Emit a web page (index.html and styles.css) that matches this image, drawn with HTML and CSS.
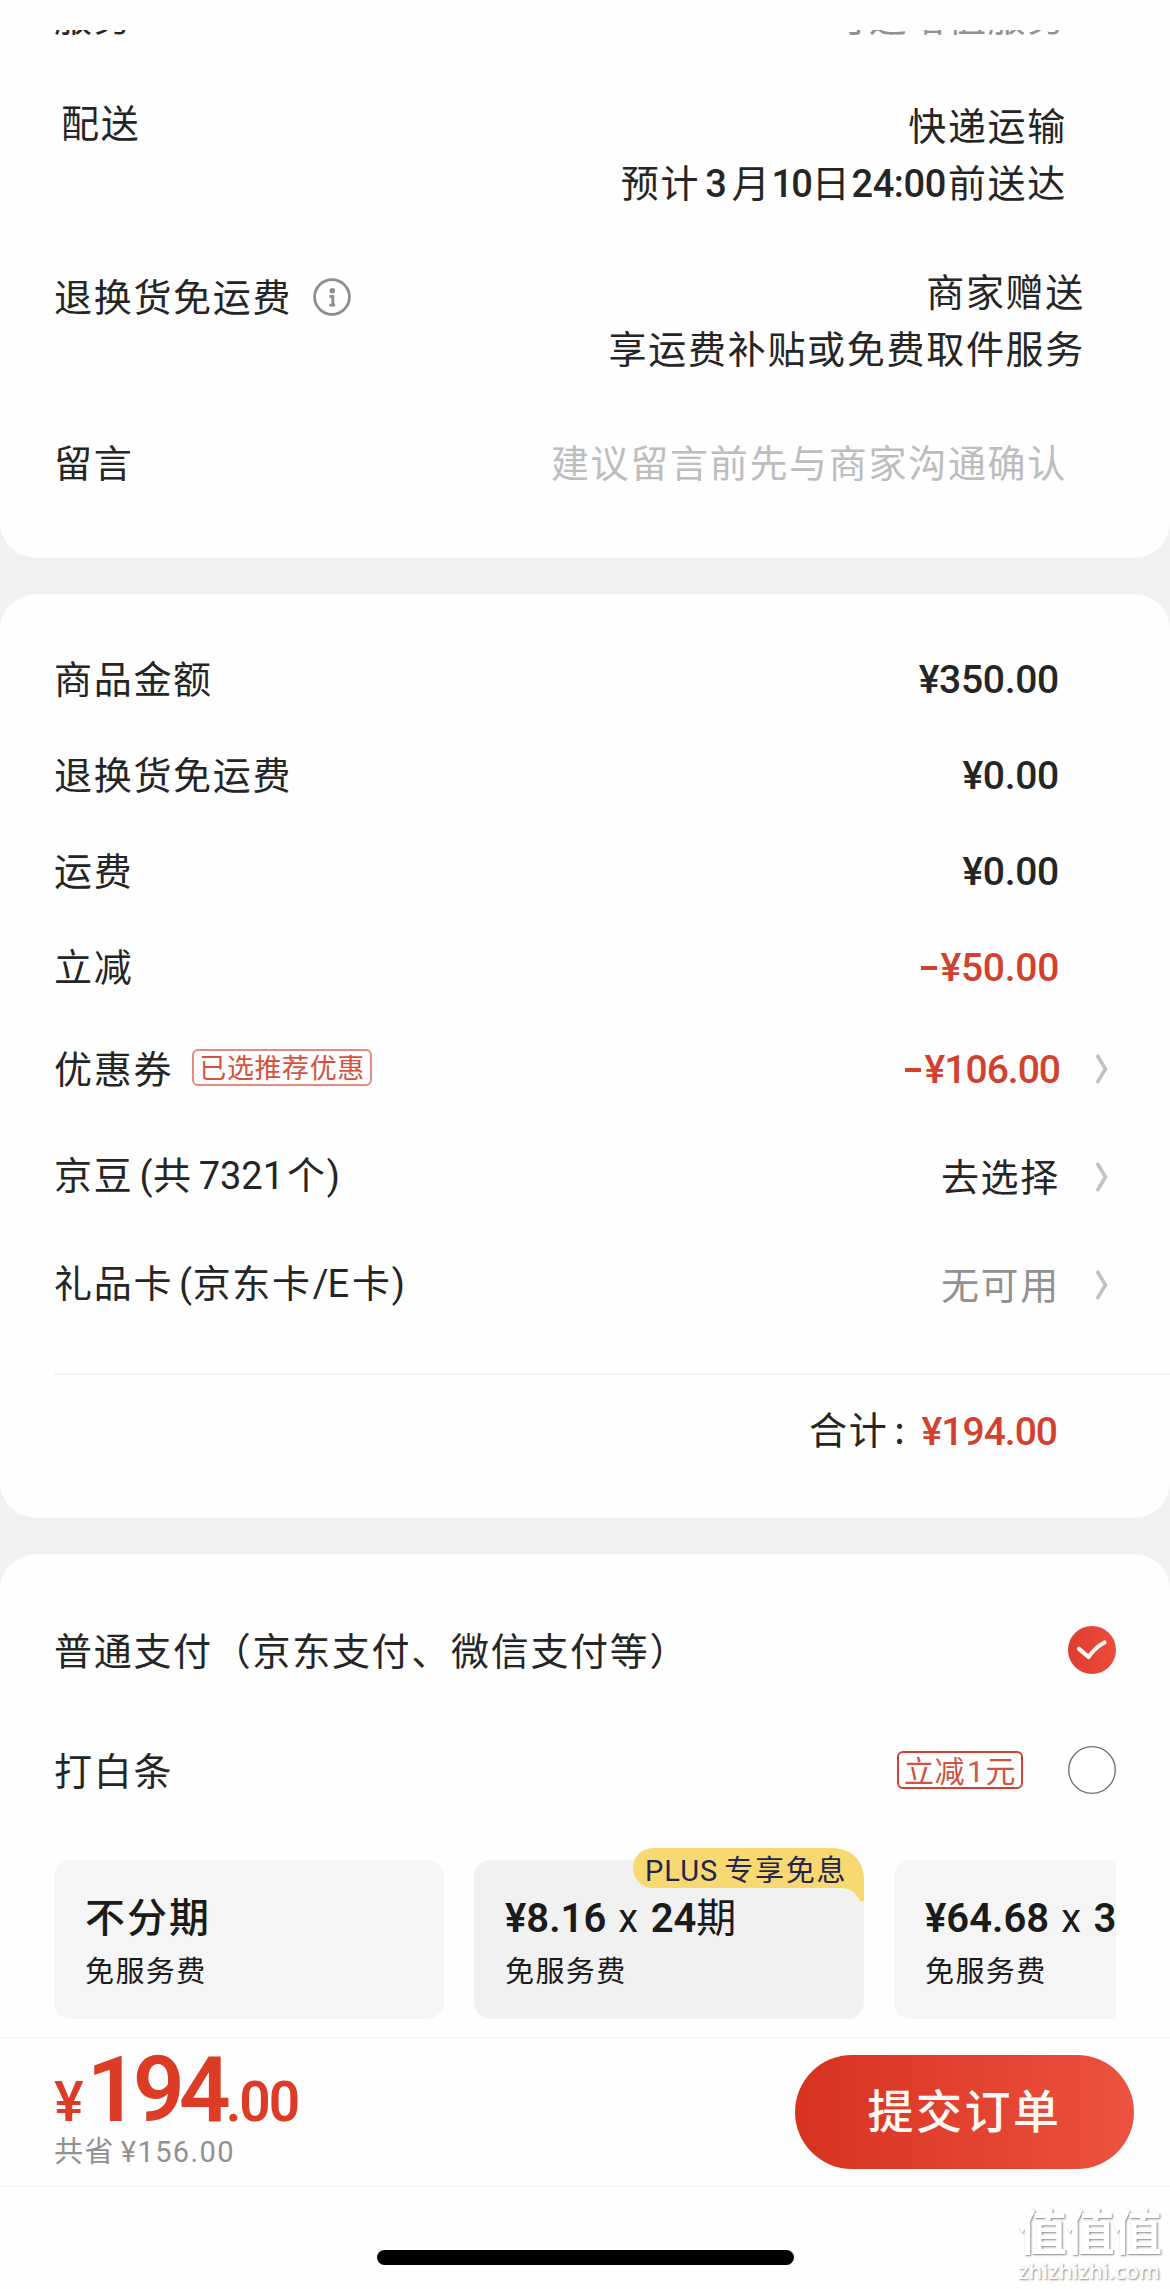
FILE: index.html
```html
<!DOCTYPE html>
<html lang="zh-CN">
<head>
<meta charset="utf-8">
<title>提交订单</title>
<link rel="stylesheet" href="styles.css">
</head>
<body>
<main class="page">
  <section class="card delivery">
    <div class="cut">
      <div class="cut-line"><span>服务</span><span class="muted cut-value">可选增值服务</span></div>
    </div>
    <div class="info shipping">
      <span class="label">配送</span>
      <div class="value">快递运输<br>预计<b class="num n3">3</b>月<b class="num n10">10</b>日<b class="num nt">24:00</b>前送达</div>
    </div>
    <div class="info returns">
      <span class="label">退换货免运费
        <svg class="info-icon" viewBox="0 0 38 38"><circle cx="19" cy="19" r="17.4" fill="none" stroke="#8e8e8e" stroke-width="2.8"/><circle cx="19.3" cy="12.8" r="2.8" fill="#8e8e8e"/><path d="M16.3 18.4h3.5v8.6M16.3 27.1h5.8" fill="none" stroke="#8e8e8e" stroke-width="2.8"/></svg>
      </span>
      <div class="value">商家赠送<br>享运费补贴或免费取件服务</div>
    </div>
    <div class="info message">
      <span class="label">留言</span>
      <div class="value placeholder">建议留言前先与商家沟通确认</div>
    </div>
  </section>

  <section class="card amounts">
    <div class="row r95"><span>商品金额</span><span class="num price">¥350.00</span></div>
    <div class="row r96"><span>退换货免运费</span><span class="num price">¥0.00</span></div>
    <div class="row r96"><span>运费</span><span class="num price">¥0.00</span></div>
    <div class="row r96"><span>立减</span><span class="num price red"><i class="minus"></i>¥50.00</span></div>
    <div class="row link coupon"><span class="label">优惠券<em class="tag">已选推荐优惠</em></span><span class="num price tight red"><i class="minus"></i>¥106.00</span>
      <svg class="chevron" viewBox="0 0 14 30"><path d="M2 1l8.5 14L2 29" fill="none" stroke="#c2c2c2" stroke-width="3.6"/></svg></div>
    <div class="row link"><span>京豆<span class="latin gap">(</span>共<span class="latin beans">7321</span>个<span class="latin">)</span></span><span>去选择</span>
      <svg class="chevron" viewBox="0 0 14 30"><path d="M2 1l8.5 14L2 29" fill="none" stroke="#c2c2c2" stroke-width="3.6"/></svg></div>
    <div class="row link"><span>礼品卡<span class="latin gap">(</span>京东卡<span class="latin ecard">/E</span>卡<span class="latin">)</span></span><span class="muted">无可用</span>
      <svg class="chevron" viewBox="0 0 14 30"><path d="M2 1l8.5 14L2 29" fill="none" stroke="#c2c2c2" stroke-width="3.6"/></svg></div>
    <div class="total"><span>合计<span class="colon">:</span></span><span class="num price tight red">¥194.00</span></div>
  </section>

  <section class="card payment">
    <div class="pay"><span>普通支付（京东支付、微信支付等）</span>
      <svg class="radio" viewBox="0 0 48 48"><defs><linearGradient id="rd" x1="0" x2="1" y2="0"><stop stop-color="#dd3c30"/><stop offset="1" stop-color="#ee4c3c"/></linearGradient></defs><circle cx="24" cy="24" r="24" fill="url(#rd)"/><path d="M11 22.8L20.500 31Q27 21.500 36.500 16.500" fill="none" stroke="#fff8f0" stroke-width="4.200" stroke-linecap="round" stroke-linejoin="round"/></svg>
    </div>
    <div class="pay"><span class="grow">打白条</span><em class="tag tag-off">立减<span class="latin one">1</span>元</em>
      <svg class="radio" viewBox="0 0 48 48"><circle cx="24" cy="24" r="23.300" fill="#fff" stroke="#707070" stroke-width="1.300"/></svg>
    </div>
    <div class="plans">
      <div class="plan"><div class="plan-title strong">不分期</div><div class="plan-sub">免服务费</div></div>
      <div class="plan active">
        <div class="badge">
          <svg class="badge-shape" viewBox="0 0 231 54"><path d="M20 0H198C220 0 231 14 231 32V53H227C223 44 218 40 206 40H20A20 20 0 0 1 20 0Z" fill="#f8d870"/></svg>
          <span class="badge-text"><span class="latin plus">PLUS</span>专享免息</span>
        </div>
        <div class="plan-title"><b class="num">¥8.16</b><span class="latin times">x</span><b class="num">24</b>期</div><div class="plan-sub">免服务费</div>
      </div>
      <div class="plan"><div class="plan-title"><b class="num">¥64.68</b><span class="latin times">x</span><b class="num">3</b>期</div><div class="plan-sub">免服务费</div></div>
    </div>
  </section>

  <footer class="bar">
    <div class="sum">
      <div class="sum-main"><span class="yen">¥</span><span class="big">194</span><span class="cents">.00</span></div>
      <div class="saved">共省<span class="latin saved-num">¥156.00</span></div>
    </div>
    <button class="submit">提交订单</button>
  </footer>
  <div class="bottom">
    <div class="home"></div>
    <div class="mark"><div class="mark-cn">值值值</div><div class="mark-en">zhizhizhi.com</div></div>
  </div>
</main>
</body>
</html>
```
FILE: styles.css
```css
* { box-sizing: border-box; }
body {
  margin: 0;
  background: #f1f1f1;
  color: #252525;
  font: 38px/57px "Noto Sans CJK SC", sans-serif;
  letter-spacing: 1.7px;
}
.page { width: 1170px; height: 2289px; overflow: hidden; display: flex; flex-direction: column; }
.card { background: #fefefe; flex: none; }
.num { font-family: Roboto, sans-serif; font-weight: 500; letter-spacing: 0; }
.latin { font-family: Roboto, sans-serif; letter-spacing: .5px; }
.muted { color: #919191; }
.red { color: #d2412e; }

.delivery { height: 558px; border-radius: 0 0 36px 36px; padding-top: 30px; }
.cut { height: 12px; overflow: hidden; padding: 0 103px 0 54px; display: flex; align-items: flex-end; }
.cut-line { flex: 1; display: flex; justify-content: space-between; margin-bottom: -1px; }
.info { display: flex; justify-content: space-between; align-items: center; }
.info .value { text-align: right; }
.info .label { display: flex; align-items: center; }
.shipping { margin-top: 53px; padding: 0 103px 0 61px; align-items: flex-start; }
.shipping .label { margin-top: -3px; }
.returns { margin-top: 48px; padding: 0 85px 0 54px; align-items: flex-start; }
.returns .label { margin-top: 5px; }
.message { margin-top: 57px; padding: 0 103px 0 54px; }
.placeholder { color: #bdbdbd; }
.info-icon { width: 38px; height: 38px; margin-left: 21px; margin-top: 4px; }
.n3 { margin: 0 5px; }
.n10 { margin: 0 1px 0 0; letter-spacing: -2px; }
.nt { margin: 0 2px 0 0; letter-spacing: -.4px; }

.amounts { margin-top: 36px; height: 924px; border-radius: 36px; padding-top: 35px; display: flex; flex-direction: column; }
.row { display: flex; justify-content: space-between; align-items: center; padding: 0 111px 0 54px; }
.r95 { height: 95px; }
.r96 { height: 96px; }
.price { display: flex; align-items: center; font-size: 39px; padding-top: 8px; letter-spacing: -.3px; }
.tight { letter-spacing: -1px; }
.minus { width: 16px; height: 4px; background: #d2412e; margin-right: 4px; }
.link { height: 108px; padding-right: 61px; }
.link > :first-child { flex: 1; }
.coupon .label { display: flex; align-items: center; }
.chevron { width: 14px; height: 30px; margin-left: 35px; margin-top: 6px; }
.tag { font-style: normal; border: 2px solid #e08d80; border-radius: 6px; color: #d4513f; font-size: 27px; line-height: 31px; height: 37px; width: 180px; text-align: center; letter-spacing: .6px; margin-left: 19px; margin-top: 3px; white-space: nowrap; }
.gap { margin-left: 6px; }
.beans { margin: 0 3px 0 6px; letter-spacing: 0; }
.ecard { margin: 0 4px 0 1px; letter-spacing: -1px; }
.total { margin: 37px 0 0 54px; border-top: 2px solid #f2f2f2; padding: 24px 113px 0 0; display: flex; justify-content: flex-end; }
.total .price { padding-top: 5px; }
.colon { margin: 0 15px 0 6px; }

.payment { margin-top: 36px; height: 483px; border-radius: 36px 36px 0 0; padding: 36px 54px 0 54px; }
.pay { height: 120px; display: flex; align-items: center; justify-content: space-between; }
.pay > span { margin-top: -4px; }
.grow { flex: 1; }
.radio { width: 48px; height: 48px; flex: none; }
.tag-off { width: 126px; height: 38px; font-size: 30px; line-height: 32px; margin: 0 45px 0 0; border-color: #d2412e; }
.one { margin: 0 1px 0 2px; }
.plans { margin-top: 18px; display: flex; gap: 30px; overflow: hidden; padding-top: 12px; }
.plan { flex: 0 0 390px; height: 159px; border-radius: 17px; background: #f5f5f5; padding: 27px 0 0 31px; color: #1b1b1b; position: relative; white-space: nowrap; }
.active { background: #f1f1f1; }
.plan-title { font-size: 40px; line-height: 56px; height: 56px; letter-spacing: 1px; }
.plan-title .num { font-weight: 600; letter-spacing: 0; }
.strong { font-weight: 500; letter-spacing: 2px; }
.times { margin: 0 12px; }
.plan-sub { font-size: 29px; line-height: 52px; letter-spacing: 1.4px; }
.badge { position: absolute; right: 0; top: -12px; width: 231px; height: 54px; }
.badge-shape { position: absolute; inset: 0; width: 231px; height: 54px; }
.badge-text { position: relative; display: block; padding-left: 12px; font-size: 29px; line-height: 40px; letter-spacing: 1.8px; color: #22264e; }
.plus { margin-right: 6px; letter-spacing: 1px; }

.bar { flex: none; height: 150px; background: #fefefe; border: solid #f7f7f7; border-width: 2px 0; display: flex; justify-content: space-between; padding: 16px 36px 0 54px; }
.sum-main { font-family: Roboto, sans-serif; font-weight: 600; color: #dc3c26; height: 76px; line-height: 70px; display: flex; align-items: baseline; letter-spacing: 0; }
.yen { font-size: 56px; font-weight: 500; margin-right: 3px; }
.big { font-size: 91px; letter-spacing: -6px; }
.cents { font-size: 55px; letter-spacing: -2px; margin-left: 1px; }
.saved { font-size: 29px; line-height: 36px; color: #919191; letter-spacing: 1.4px; }
.saved-num { margin-left: 6px; letter-spacing: 1.4px; }
.submit { width: 339px; height: 114px; border: 0; border-radius: 57px; background: linear-gradient(90deg, #d83220, #ec523f); color: #fffaf5; font: 500 46px/106px "Noto Sans CJK SC", sans-serif; letter-spacing: 2.5px; padding: 0 0 8px; }
.bottom { flex: 1; background: #fefefe; position: relative; }
.home { width: 417px; height: 15px; border-radius: 8px; background: #000; margin: 63px 0 0 377px; }
.mark { position: absolute; left: 1018px; top: 15px; color: #fff; text-shadow: 1px 1px 2px #888; }
.mark-cn { font-size: 49px; line-height: 54px; letter-spacing: -1.5px; font-weight: 700; }
.mark-en { font: 500 22px/28px "Noto Sans", sans-serif; letter-spacing: 0; }
```
